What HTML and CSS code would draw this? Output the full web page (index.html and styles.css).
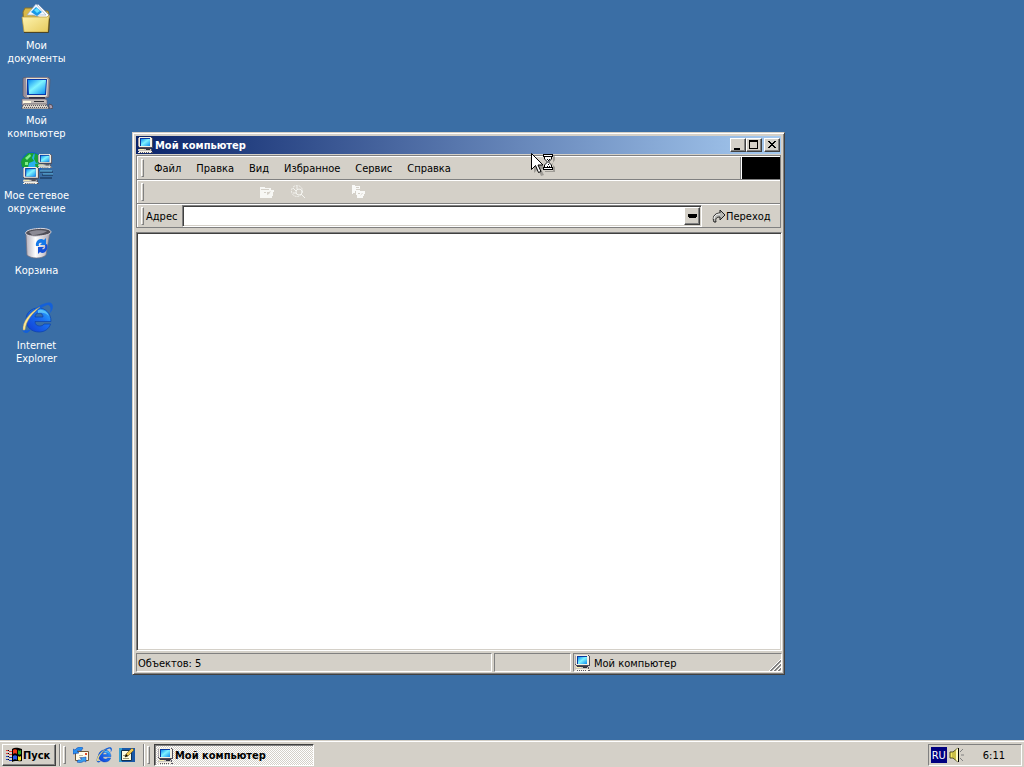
FILE: index.html
```html
<!DOCTYPE html>
<html lang="ru">
<head>
  <meta charset="utf-8">
  <title>Мой компьютер</title>
  <link rel="stylesheet" href="styles.css">
</head>
<body>
  <svg class="sprites" aria-hidden="true">
    <defs>
      <linearGradient id="screen" x1="0" y1="0" x2="1" y2="1">
        <stop offset="0" stop-color="#0a8cf0"/>
        <stop offset="0.45" stop-color="#7ff4ff"/>
        <stop offset="1" stop-color="#0c8cf0"/>
      </linearGradient>
      <linearGradient id="folder" x1="0" y1="0" x2="1" y2="1">
        <stop offset="0" stop-color="#fff6b4"/>
        <stop offset="1" stop-color="#e6ca5c"/>
      </linearGradient>
      <linearGradient id="bin" x1="0" y1="0" x2="1" y2="0">
        <stop offset="0" stop-color="#b4b0bc"/>
        <stop offset="0.4" stop-color="#ffffff"/>
        <stop offset="1" stop-color="#a8a4b0"/>
      </linearGradient>
      <linearGradient id="ie" x1="0" y1="1" x2="1" y2="0">
        <stop offset="0" stop-color="#1038d0"/>
        <stop offset="0.6" stop-color="#1a70f0"/>
        <stop offset="1" stop-color="#30b8ff"/>
      </linearGradient>
      <symbol id="pc" viewBox="0 0 16 16" preserveAspectRatio="none">
        <path d="M1 0h13v1h1v10H1v-1H0V1h1z" fill="#504c58"/>
        <path d="M1 0h12v1h1v9H1V9H0V1h1z" fill="#f4f0e4"/>
        <path d="M0 1h1v8H0z" fill="#a8a4ac"/>
        <path d="M2 1h10v8H2z" fill="#0838a0"/>
        <path d="M3 2h9v7H3z" fill="url(#screen)"/>
        <path d="M2 11h11v1H2z" fill="#383848"/>
        <path d="M0 12h13v2H0z" fill="#c8c4c0"/>
        <path d="M1 12h5v1H1z" fill="#f8f0b0"/>
        <path d="M8 12h4v1H8z" fill="#303038"/>
        <path d="M1 14h13v1h1v1H0v-1h1z" fill="#f4f0e4"/>
        <path d="M2 15h1v1H2zM4 15h1v1H4zM6 15h1v1H6zM8 15h1v1H8zM10 15h1v1h-1zM13 15h2v1h-2zM13 12h1v2h-1z" fill="#585460"/>
      </symbol>
      <symbol id="globe-e" viewBox="0 0 32 32">
        <path fill-rule="evenodd" d="M5 18C5 10 11 6 17.500 6S30 11 30 19.500H14c0 3 2 4.500 4.500 4.500 2 0 3.500-.5 4.500-2h6.500c-1.500 5-6 8-11.500 8C10.500 30 5 25 5 18zM14 15h8c0-2.500-1.500-4-4-4s-4 1.500-4 4z" fill="url(#ie)" stroke="#0a3fae" stroke-width=".7"/>
        <path d="M17 8c5-1 9 1 11 6-3-3-6-4-11-3z" fill="#58c0f8"/>
        <path d="M5 31C-1 31 1 21 7 13 14 5 26-1 30 1c3 2 2 7-1 10 1-4 1-7-2-8C20 4 4 18 4 26c0 3 2 3 6 1-1 2-3 4-5 4z" fill="#1460d8"/>
        <path d="M2 28C1 20 9 10 19 5 12 11 5 18 4 28z" fill="#ffe890" stroke="#a89458" stroke-width=".5"/>
      </symbol>
    </defs>
  </svg>

  <main class="desktop">
    <nav class="icons" aria-label="Рабочий стол">
      <a class="shortcut" href="#">
        <svg viewBox="0 0 32 32">
          <path d="M2 10l2-4h8l2 3h13l1 3v16H3z" fill="#d8b848" stroke="#85702c"/>
          <path d="M9 12L17 2l12 12-3 4z" fill="#fff" stroke="#7088b0" stroke-width=".7"/>
          <path d="M6 13l9-11 10 11z" fill="#f4f8ff" stroke="#90a4c0" stroke-width=".6"/>
          <path d="M10 10l5-5 6 5-5 4z" fill="#1898e8"/>
          <path d="M13 8l3-2 3 3-3 2z" fill="#60e0ff"/>
          <path d="M1 15h25l2-2v4l-1 13H3z" fill="url(#folder)" stroke="#b89a3c" stroke-width=".7"/>
          <path d="M3 30.500h24.500l1-14" fill="none" stroke="#4a4428"/>
        </svg>
        <span>Мои<br>документы</span>
      </a>
      <a class="shortcut" href="#">
        <svg viewBox="0 0 32 32">
          <path d="M2 1l4-1h21l2 2-1 18-3 1H4l-2-2z" fill="#98909c" stroke="#5c5664" stroke-width=".7"/>
          <path d="M5 1h21l1 2-1 16-2 1H6z" fill="#e4dfd2"/>
          <path d="M6 2h20l-1 16H6z" fill="#0838a8"/>
          <path d="M7 3h18l-1 14H8z" fill="url(#screen)"/>
          <path d="M8 20h16v2H8z" fill="#302c40"/>
          <path d="M1 22h23l2 1v5H1z" fill="#c4bcb8" stroke="#68607a" stroke-width=".7"/>
          <path d="M2 24h8v2H2z" fill="#fff8e0"/>
          <path d="M13 24h10v1H13z" fill="#303038"/>
          <path d="M3 27h22l3 4-1 1H1v-2z" fill="#dcd6ca" stroke="#484350" stroke-width=".7"/>
          <path d="M4 28.500h21M3 30.500h23" stroke="#5c5664" stroke-dasharray="1 1"/>
          <path d="M28 27l3 1 1 3-3 1-1-2z" fill="#a89cb0" stroke="#483c40" stroke-width=".7"/>
        </svg>
        <span>Мой<br>компьютер</span>
      </a>
      <a class="shortcut" href="#">
        <svg viewBox="0 0 32 32">
          <circle cx="11" cy="11" r="11" fill="#1460c8"/>
          <circle cx="12" cy="10" r="8" fill="#28b0f0"/>
          <path d="M1 7l6-6 6 0-2 5 2 3-5 2-1 5-6-1-1-5zM14 1l5 3 1 6-5 1-2-4zM14 12l5-1 1 3-5 3z" fill="#18a038"/>
          <path d="M4 6l5-4 1 2-4 4zM4 10h3v3H4z" fill="#80f088"/>
          <path d="M19 20h13M21 23h11M19 26h12" stroke="#102848"/>
          <path d="M19 19h12M22 22h10" stroke="#60b8e0"/>
          <use href="#pc" x="17" y="2" width="15" height="14"/>
          <use href="#pc" x="2" y="15" width="17" height="17"/>
        </svg>
        <span>Мое сетевое<br>окружение</span>
      </a>
      <a class="shortcut" href="#">
        <svg viewBox="0 0 32 32">
          <path d="M5 7l1 21c4 4 15 4 19 0l4-23z" fill="url(#bin)" stroke="#77717c" stroke-width=".7"/>
          <path d="M5 7c-2-3 5-5 12-5.500s13 1 13 3.500C30 9 8 11 5 7z" fill="#504f58" stroke="#dcd8e0"/>
          <path d="M8 5c4-2 13-2 18-1-2 2-10 4-15 4z" fill="#8c8a94"/>
          <path d="M15 19c-1-5 4-9 8-6l2-2v7h-6l2-2c-2-1-4 0-3 3z" fill="#1478e8"/>
          <path d="M26 17c2 6-3 11-7 8l-2 2v-7h6l-2 2c2 1 4-1 3-4z" fill="#1450d8"/>
        </svg>
        <span>Корзина</span>
      </a>
      <a class="shortcut" href="#">
        <svg><use href="#globe-e"/></svg>
        <span>Internet<br>Explorer</span>
      </a>
    </nav>

    <section class="window">
      <header class="titlebar">
        <svg class="small-icon"><use href="#pc"/></svg>
        <h1>Мой компьютер</h1>
        <div class="controls">
          <button type="button" aria-label="Свернуть"><svg viewBox="0 0 12 10"><path d="M2 8h6v2H2z"/></svg></button>
          <button type="button" aria-label="Развернуть"><svg viewBox="0 0 12 10"><path fill-rule="evenodd" d="M1 0h9v9H1zM2 2v6h7V2z"/></svg></button>
          <button type="button" class="close" aria-label="Закрыть"><svg viewBox="0 0 12 10"><path d="M2 1h2v1h1v1h2V2h1V1h2v1H9v1H8v1H7v1h1v1h1v1h1v1H8V7H7V6H5v1H4v1H2V7h1V6h1V5h1V4H4V3H3V2H2z"/></svg></button>
        </div>
      </header>

      <div class="bars">
        <div class="bar">
          <i class="grip"></i>
          <nav class="menu">
            <button type="button">Файл</button>
            <button type="button">Правка</button>
            <button type="button">Вид</button>
            <button type="button">Избранное</button>
            <button type="button">Сервис</button>
            <button type="button">Справка</button>
          </nav>
          <div class="throbber"></div>
        </div>
        <div class="bar">
          <i class="grip"></i>
          <div class="tools">
            <button type="button" aria-label="Папки">
              <svg class="small-icon" viewBox="0 0 16 16"><path fill-rule="evenodd" d="M1 3h5v1h6v2h3v2h-1v4h-1v2H1zM2 5v1h8V5zM8 8v3l2-1 2-3-2 1zM5 8v1h2V8z" fill="#f7f7f4"/></svg>
            </button>
            <button type="button" aria-label="Журнал">
              <svg class="small-icon" viewBox="0 0 16 16" fill="none" stroke="#f4f4f0"><circle cx="7" cy="7" r="5.500" stroke-dasharray="2 1"/><circle cx="9" cy="8" r="3"/><path d="M11 10l4 4M3 4l3 3M7 2v3M3 9h3"/></svg>
            </button>
            <button type="button" aria-label="Переместить">
              <svg class="small-icon" viewBox="0 0 16 16"><path fill-rule="evenodd" d="M1 1h3v1h5v3h-4v2H4v2H2v1H1zM5 3v1h3V3zM5 6h4v1h5v3h-1v2h-1v2H6v-3H5zM7 9v1h2V9zM9 12l2-3h1z" fill="#f9f9f7"/></svg>
            </button>
          </div>
        </div>
        <div class="bar">
          <i class="grip"></i>
          <label for="address">Адрес</label>
          <div class="combo">
            <input type="text" id="address">
            <button type="button" aria-label="Открыть список"><svg viewBox="0 0 9 4"><path d="M0 0h9v3H8v1H1V3H0z"/></svg></button>
          </div>
          <button type="button" class="go">
            <svg viewBox="0 0 14 14"><path d="M2 13C0 9 2 4 8 4V1l5 5-5 5V8C5 8 3 9 4 13z" fill="#b8b8b4"/><path d="M2 13C0 9 2 4 8 4V1l5 5-5 5V8C5 8 3 9 4 13z" fill="none" stroke="#202020"/><path d="M2 10c0-3 2-5 6-5" fill="none" stroke="#fff"/></svg>
            Переход
          </button>
        </div>
      </div>

      <div class="content"></div>

      <footer class="status">
        <span class="objects">Объектов: 5</span>
        <span class="middle"></span>
        <span class="zone">
          <svg class="small-icon"><use href="#pc"/></svg>
          Мой компьютер
          <svg class="resize" viewBox="0 0 12 12"><path d="M0 12L12 0M4 12l8-8M8 12l4-4" stroke="#fff"/><path d="M1 12L12 1M2 12L12 2M5 12l7-7M6 12l6-6M9 12l3-3M10 12l2-2" stroke="#808080"/></svg>
        </span>
      </footer>
    </section>

    <svg class="cursor" viewBox="0 0 25 24">
      <path d="M3 3v17l4-4 3 7 3-1-3-6h5z" fill="#000" opacity=".25"/>
      <path d="M22 3h2v4l-3 4 3 3v5H14v-1h8z" fill="#000" opacity=".25"/>
      <path d="M.5 .5v16l4-4 3 7 2.500-1-3-6.500h5z" fill="#fff" stroke="#000"/>
      <path d="M13 2h8v4l-3 3 3 3v4h-8v-4l3-3-3-3z" fill="#fff"/>
      <path d="M12 1h10v1H12zM12 3h10v1H12zM12 14h10v1H12zM12 16h10v1H12zM12 2h1v1h-1zM21 2h1v1h-1zM12 15h1v1h-1zM21 15h1v1h-1z"/>
      <path d="M13.500 4v2l3 3-3 3v2M20.500 4v2l-3 3 3 3v2" fill="none" stroke="#000"/>
      <path d="M16 6h1v1h-1zM18 6h1v1h-1zM17 7h1v1h-1zM17 11h1v1h-1zM16 13h1v1h-1zM18 13h1v1h-1z"/>
    </svg>
  </main>

  <footer class="taskbar">
    <button type="button" class="start">
      <svg viewBox="0 0 16 16">
        <path d="M6 2c3-2 6-1 10 0v12c-4 1-7-1-10 1z" fill="#000"/>
        <path d="M7 3c1-1 3-1 4 0v4c-1-1-3-1-4 0z" fill="#f03818"/>
        <path d="M12 3c1 1 2 1 3 0v4c-1 1-2 1-3 0z" fill="#28a828"/>
        <path d="M7 9c1-1 3-1 4 0v4c-1-1-3-1-4 0z" fill="#2858e8"/>
        <path d="M12 9c1 1 2 1 3 0v4c-1 1-2 1-3 0z" fill="#f8e020"/>
        <path d="M0 3h2v1H0zM3 4h3v1H3zM0 6h2v1H0zM3 7h3v1H3z" fill="#e04040"/>
        <path d="M0 9h2v1H0zM3 10h3v1H3zM0 12h2v1H0zM3 13h3v1H3z" fill="#2040c0"/>
        <path d="M2 3h1v1H2zM2 6h1v1H2zM2 9h1v1H2zM2 12h1v1H2z" fill="#000"/>
      </svg>
      Пуск
    </button>
    <i class="divider"></i>
    <i class="grip"></i>
    <nav class="quick">
      <a href="#" aria-label="Outlook Express">
        <svg class="small-icon" viewBox="0 0 16 16">
          <path d="M2.500 4.500h13v9h-13z" fill="#fffbe8" stroke="#705838"/>
          <path d="M12 6h2v2h-2z" fill="#e04828"/><path d="M6 8.500h4M6 10.500h3" stroke="#c4b89c"/>
          <path d="M0 7V2l2 1c2-3 6-4 8-2L8 4C7 3 5 3 4 4l2 2z" fill="#2890f0" stroke="#1038a0" stroke-width=".5"/>
          <path d="M13 10v5l-2-1c-2 2-6 2-7 1l1-2c2 0 3 0 4-1l-2-1z" fill="#38a0f0" stroke="#1038a0" stroke-width=".5"/>
        </svg>
      </a>
      <a href="#" aria-label="Internet Explorer"><svg class="small-icon"><use href="#globe-e"/></svg></a>
      <a href="#" aria-label="Свернуть все окна">
        <svg class="small-icon" viewBox="0 0 16 16">
          <path d="M0 1h16v14H0z" fill="#1858a8"/><path d="M0 1h3v14H0z" fill="#38a0d0"/>
          <path d="M2.500 3.500h10v10h-10z" fill="#fffce0" stroke="#103050"/>
          <path d="M4 11.500h6M4 8.500h2" stroke="#a09870"/>
          <path d="M6 10l1-3 6-6 2 2-6 6z" fill="#f0c850" stroke="#604820" stroke-width=".6"/><path d="M6 10l1-3 2 2z"/>
        </svg>
      </a>
    </nav>
    <i class="divider"></i>
    <i class="grip"></i>
    <button type="button" class="task">
      <svg class="small-icon"><use href="#pc"/></svg>
      Мой компьютер
    </button>
    <div class="tray">
      <button type="button" class="lang">RU</button>
      <svg class="small-icon" viewBox="0 0 16 16">
        <path d="M1 5h3l5-4v14l-5-4H1z" fill="#f4e860" stroke="#4c4820"/>
        <path d="M4 5v6M6 4v8" stroke="#a09830"/><path d="M7 3l2-2v14l-2-2z" fill="#fffcc0"/>
        <path d="M9.500 1v14" stroke="#000"/>
        <path d="M11 5l3-3M12 8h3M11 11l3 3" stroke="#808080"/>
      </svg>
      <time>6:11</time>
    </div>
  </footer>
</body>
</html>
```
FILE: styles.css
```css
* {
  box-sizing: border-box;
}

body {
  display: flex;
  flex-direction: column;
  height: 100vh;
  margin: 0;
  overflow: hidden;
  background-color: #3a6ea5;
  font: 11px/13px "DejaVu Sans Condensed", "DejaVu Sans", sans-serif;
  font-stretch: condensed;
  color: #000;
}

button {
  margin: 0;
  padding: 0;
  border: none;
  background: none;
  font: inherit;
  color: inherit;
}

svg {
  display: block;
  flex: none;
}

.sprites {
  position: absolute;
  width: 0;
  height: 0;
}

.small-icon {
  width: 16px;
  height: 16px;
}

/* desktop */
.desktop {
  position: relative;
  flex: 1;
}

.icons {
  width: 73px;
  padding-top: 2px;
}

.shortcut {
  display: flex;
  flex-direction: column;
  align-items: center;
  gap: 5px;
  height: 75px;
  color: #fff;
  text-align: center;
  text-decoration: none;
  white-space: nowrap;
}

.shortcut > svg {
  width: 32px;
  height: 32px;
}

/* window */
.window {
  position: absolute;
  left: 132px;
  top: 132px;
  display: flex;
  flex-direction: column;
  width: 653px;
  height: 543px;
  padding: 2px;
  background-color: #d4d0c8;
  border: 1px solid;
  border-color: #d4d0c8 #404040 #404040 #d4d0c8;
  box-shadow: inset 1px 1px #fff, inset -1px -1px #808080;
}

.titlebar {
  display: flex;
  align-items: center;
  height: 18px;
  margin: 1px;
  padding: 0 1px 0 2px;
  background: linear-gradient(to right, #0a246a, #a6caf0);
  color: #fff;
}

.titlebar h1 {
  flex: 1;
  margin: 0 1px;
  font-size: 11px;
}

.controls {
  display: flex;
}

.controls button {
  display: flex;
  align-items: center;
  justify-content: center;
  width: 16px;
  height: 14px;
  color: #000;
}

.controls svg {
  width: 12px;
  height: 10px;
}

.controls .close {
  margin-left: 2px;
}

.controls button,
.combo button,
.start {
  background-color: #d4d0c8;
  border: 1px solid;
  border-color: #fff #404040 #404040 #fff;
  box-shadow: inset -1px -1px #808080;
}

.bars {
  margin: 0 1px;
  border-left: 1px solid #808080;
  border-right: 1px solid #808080;
}

.bar {
  display: flex;
  align-items: center;
  height: 24px;
  padding: 1px 0 0 4px;
  border-top: 1px solid #808080;
  box-shadow: inset 1px 1px #fff;
}

.bar:last-child {
  height: 25px;
  border-bottom: 1px solid #808080;
}

.grip {
  flex: none;
  width: 3px;
  height: 18px;
  border: 1px solid;
  border-color: #fff #808080 #808080 #fff;
}

.menu {
  display: flex;
  flex: 1;
  gap: 15px;
  margin-left: 10px;
  padding-top: 1px;
}

.throbber {
  align-self: stretch;
  width: 40px;
  background-color: #000;
  border-left: 1px solid #808080;
  box-shadow: inset 1px 0 #fff;
}

.tools {
  display: flex;
  gap: 15px;
  margin-left: 115px;
}

.tools button:last-child {
  margin-left: 15px;
  padding-left: 15px;
}

.bar label {
  width: 38px;
  padding-left: 2px;
}

.combo {
  display: flex;
  flex: 1;
  height: 22px;
  border: 1px solid;
  border-color: #808080 #fff #fff #808080;
  box-shadow: inset 1px 1px #404040, inset -1px -1px #d4d0c8;
  background-color: #fff;
  padding: 1px;
}

.combo input {
  flex: 1;
  min-width: 0;
  margin: 1px;
  padding: 0 2px;
  border: none;
  outline: none;
  background: none;
  font: inherit;
}

.combo button {
  display: flex;
  align-items: center;
  justify-content: center;
  width: 16px;
}

.combo svg {
  width: 9px;
  height: 4px;
}

.go {
  display: flex;
  align-items: center;
  width: 78px;
  padding-left: 10px;
}

.go svg {
  width: 14px;
  height: 14px;
}

.content {
  flex: 1;
  margin: 4px 0 0 1px;
  background-color: #fff;
  border: 1px solid;
  border-color: #808080 #fff #fff #808080;
  box-shadow: inset 1px 1px #404040, inset -1px -1px #d4d0c8;
}

.status {
  display: grid;
  grid-template-columns: 1fr 77px 209px;
  gap: 2px;
  height: 19px;
  margin: 2px 0 0 1px;
}

.status span {
  display: flex;
  align-items: center;
  gap: 3px;
  padding: 1px 1px 0;
  border: 1px solid;
  border-color: #808080 #fff #fff #808080;
}

.status .zone {
  padding-right: 0;
}

.resize {
  align-self: flex-end;
  width: 12px;
  height: 12px;
  margin-left: auto;
}

.cursor {
  position: absolute;
  left: 531px;
  top: 153px;
  width: 25px;
  height: 24px;
}

/* taskbar */
.taskbar {
  display: flex;
  align-items: center;
  height: 27px;
  padding: 2px 2px 0;
  background-color: #d4d0c8;
  border-top: 1px solid #d4d0c8;
  box-shadow: inset 0 1px #fff;
}

.start,
.task {
  display: flex;
  align-items: center;
  height: 22px;
  font-weight: bold;
}

.start {
  width: 54px;
  padding-left: 3px;
}

.start svg {
  width: 16px;
  height: 16px;
  margin-right: 1px;
}

.divider {
  width: 2px;
  height: 22px;
  margin: 0 2px 0 3px;
  border-left: 1px solid #808080;
  border-right: 1px solid #fff;
}

.quick {
  display: flex;
  gap: 7px;
  margin: 0 5px 0 7px;
}

.task {
  width: 160px;
  margin-left: 4px;
  padding: 1px 3px 0;
  gap: 1px;
  border: 1px solid;
  border-color: #404040 #fff #fff #404040;
  box-shadow: inset 1px 1px #808080;
  background: repeating-conic-gradient(#fff 0 25%, #d4d0c8 0 50%) 0 0 / 2px 2px;
}

.tray {
  display: flex;
  align-items: center;
  height: 22px;
  margin-left: auto;
  padding: 0 16px 0 2px;
  border: 1px solid;
  border-color: #808080 #fff #fff #808080;
}

.lang {
  width: 16px;
  height: 16px;
  margin-right: 2px;
  background-color: #000080;
  color: #fff;
}

.tray time {
  margin-left: 18px;
}
```
